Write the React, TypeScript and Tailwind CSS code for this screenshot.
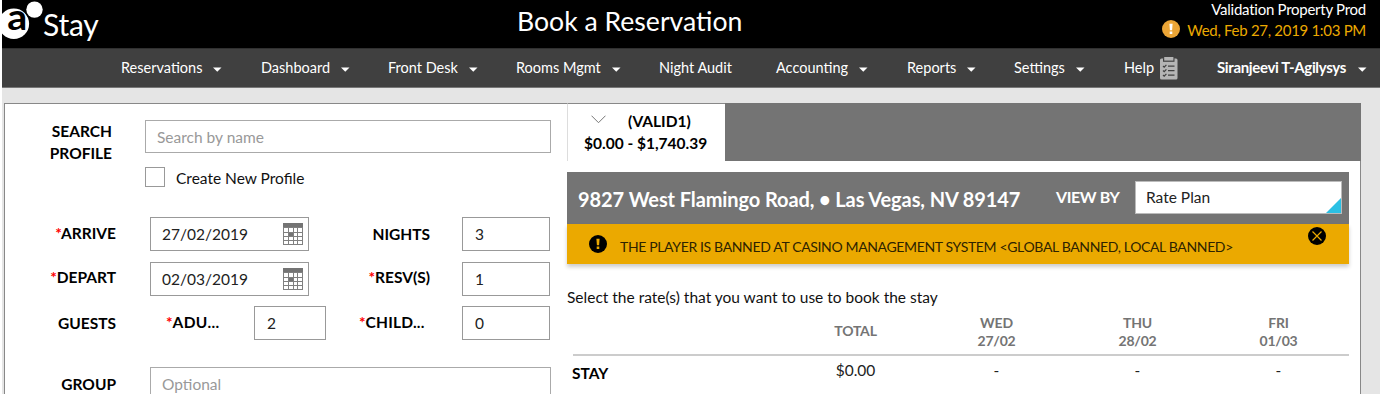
import React from 'react';

interface NavItem {
  label: string;
  width: string;
  text: string;
  caret?: boolean;
}

const navItems: NavItem[] = [
  { label: 'Reservations', width: 'w-[140px]', text: 'w-[92px]', caret: true },
  { label: 'Dashboard', width: 'w-[127px]', text: 'w-[80px]', caret: true },
  { label: 'Front Desk', width: 'w-[128px]', text: 'w-[81px]', caret: true },
  { label: 'Rooms Mgmt', width: 'w-[143px]', text: 'w-[96px]', caret: true },
  { label: 'Night Audit', width: 'w-[117px]', text: 'w-[80px]' },
  { label: 'Accounting', width: 'w-[131px]', text: 'w-[83px]', caret: true },
  { label: 'Reports', width: 'w-[107px]', text: 'w-[60px]', caret: true },
  { label: 'Settings', width: 'w-[110px]', text: 'w-[62px]', caret: true },
];

const days = [
  { day: 'WED', date: '27/02' },
  { day: 'THU', date: '28/02' },
  { day: 'FRI', date: '01/03' },
];

const Caret = () => (
  <svg width="9" height="5" viewBox="0 0 9 5" className="mt-[3px] shrink-0">
    <path d="M0 .5h8.5L4.25 4.7z" fill="#fff" />
  </svg>
);

const Logo = () => (
  <svg width="43" height="42" viewBox="0 0 43 42" className="shrink-0">
    <circle cx="11.8" cy="23.8" r="15.3" fill="#fff" />
    <circle cx="32.5" cy="9.6" r="9.8" fill="#000" />
    <circle cx="32.5" cy="9.6" r="8.2" fill="#fff" />
    <text x="5.2" y="29.6" fontSize="37" fontWeight="700" fontFamily="Lato, sans-serif" textLength="20" lengthAdjust="spacingAndGlyphs">a</text>
  </svg>
);

const ClipboardIcon = () => (
  <svg width="18" height="23" viewBox="0 0 18 23" className="mt-px ml-[5px] shrink-0">
    <rect x="0" y="1.5" width="17.5" height="21" rx="1.5" fill="#b5b5b5" />
    <path d="M3 1.2h11.5v3.6H3z" fill="#404040" />
    <path d="M4.2 0h9.2v3.6H4.2z" fill="#b5b5b5" />
    <path d="M8 9.2h6.5M8 13.7h6.5M8 18.2h6.5" stroke="#404040" strokeWidth="1.2" />
    <path d="M3 9l1.2 1.2 2.2-2.4M3 13.5l1.2 1.2 2.2-2.4M3 18l1.2 1.2 2.2-2.4" stroke="#404040" strokeWidth="1.2" fill="none" />
  </svg>
);

const CalendarIcon = () => (
  <svg width="20" height="22" viewBox="0 0 20 22" className="shrink-0">
    <path d="M0 0h20v22H0z" fill="#808080" />
    <path d="M0 0h20v4H0z" fill="#747474" />
    {[5, 10, 14, 18].map((y) =>
      [1, 6, 11, 15].map((x) => (
        <rect
          key={`${x}-${y}`}
          x={x}
          y={y}
          width={x === 11 ? 3 : 4}
          height={y === 5 ? 4 : 3}
          fill={x === 6 && y === 10 ? '#747474' : '#fff'}
        />
      ))
    )}
  </svg>
);

const AlertIcon = ({ fill, mark }: { fill: string; mark: string }) => (
  <svg width="18" height="18" viewBox="0 0 18 18" className="shrink-0">
    <circle cx="9" cy="9" r="9" fill={fill} />
    <path d="M7.4 3.8h3.2l-.5 6.4H7.9zM7.7 11.6h2.6v2.5H7.7z" fill={mark} />
  </svg>
);

const FieldLabel = ({ children, required, className }: { children: React.ReactNode; required?: boolean; className: string }) => (
  <span className={`block shrink-0 whitespace-nowrap text-[15.5px] font-bold leading-[22px] text-black ${className}`}>
    {required && <span className="text-[#f00]">*</span>}
    {children}
  </span>
);

const Field = ({ value, className }: { value: string; className: string }) => (
  <div className={`flex h-[34px] shrink-0 items-center border border-[#999] bg-white pt-0.5 pl-3 text-[15.5px] text-[#222] ${className}`}>
    {value}
  </div>
);

const DateField = ({ value }: { value: string }) => (
  <div className="flex h-[34px] w-[159px] shrink-0 items-center justify-between border border-[#999] pr-[5px] pl-[11px] text-[15.5px] text-[#222]">
    <span className="pt-0.5">{value}</span>
    <CalendarIcon />
  </div>
);

const TopBar = () => (
  <header className="flex h-12 items-start bg-black text-white">
    <div className="flex h-12 w-[515px] overflow-hidden">
      <Logo />
      <span className="-ml-[2px] text-[30px] leading-[48px] tracking-[-0.2px]">Stay</span>
    </div>
    <h1 className="w-[380px] text-[26.6px] leading-[42px]">Book a Reservation</h1>
    <div className="flex flex-1 flex-col items-end pr-[14px]">
      <span className="text-[15px] leading-[18px] tracking-[-0.26px]">Validation Property Prod</span>
      <div className="flex items-center gap-[7px] text-[15px] leading-[24px] tracking-[-0.3px] text-[#eba900]">
        <span className="-mt-0.5"><AlertIcon fill="#eba536" mark="#fff" /></span>
        <span>Wed, Feb 27, 2019 1:03 PM</span>
      </div>
    </div>
  </header>
);

const NavBar = () => (
  <nav className="flex h-10 items-center border-t border-b border-t-[#303030] border-b-[#777] bg-[#404040] pl-[119px] text-[14.5px] text-white">
    {navItems.map((item) => (
      <div key={item.label} className={`flex shrink-0 items-center ${item.width}`}>
        <span className={`whitespace-nowrap ${item.text}`}>{item.label}</span>
        {item.caret && <Caret />}
      </div>
    ))}
    <div className="flex w-[93px] shrink-0 items-center">
      <span className="w-[31px]">Help</span>
      <ClipboardIcon />
    </div>
    <div className="flex items-center">
      <span className="-mt-0.5 w-[141px] text-[15px] font-bold tracking-[-0.35px] whitespace-nowrap">Siranjeevi T-Agilysys</span>
      <Caret />
    </div>
  </nav>
);

const BookingForm = () => (
  <section className="w-[562px] shrink-0 border-t border-[#888] pt-4">
    <div className="flex">
      <FieldLabel className="w-[107px] text-right">
        SEARCH
        <br />
        PROFILE
      </FieldLabel>
      <div className="ml-[33px]">
        <div className="flex h-[33px] w-[406px] items-center border border-[#aaa] pt-0.5 pl-[11px] text-[15.5px] text-[#999]">Search by name</div>
        <div className="mt-[13px] flex items-center gap-[11px]">
          <div className="h-5 w-5 border border-[#999]" />
          <span className="pt-0.5 text-[15.5px] leading-5 text-[#111]">Create New Profile</span>
        </div>
      </div>
    </div>
    <div className="mt-[29px] flex">
      <FieldLabel required className="w-[111px] pt-[5px] text-right">ARRIVE</FieldLabel>
      <div className="ml-[34px]"><DateField value="27/02/2019" /></div>
      <FieldLabel className="w-[121px] pt-[6px] text-right">NIGHTS</FieldLabel>
      <Field value="3" className="ml-[32px] w-[88px]" />
    </div>
    <div className="mt-[11px] flex">
      <FieldLabel required className="w-[111px] pt-[4px] text-right">DEPART</FieldLabel>
      <div className="ml-[34px]"><DateField value="02/03/2019" /></div>
      <FieldLabel required className="w-[121px] pt-[4px] text-right">RESV(S)</FieldLabel>
      <Field value="1" className="ml-[32px] w-[88px]" />
    </div>
    <div className="mt-[10px] flex">
      <FieldLabel className="w-[111px] pt-[6px] text-right">GUESTS</FieldLabel>
      <FieldLabel required className="ml-[50px] w-[88px] pt-[5px]"><span className="tracking-[0.35px]">ADU...</span></FieldLabel>
      <Field value="2" className="w-[72px]" />
      <FieldLabel required className="ml-[33px] w-[103px] pt-[5px]"><span className="tracking-[0.2px]">CHILD...</span></FieldLabel>
      <Field value="0" className="w-[88px]" />
    </div>
    <div className="mt-[27px] flex">
      <FieldLabel className="w-[111px] pt-[6px] text-right">GROUP</FieldLabel>
      <div className="ml-[34px] flex h-[36px] w-[401px] items-center border border-[#aaa] pl-[11px] text-[15.5px] text-[#999]">Optional</div>
    </div>
  </section>
);

const RatePanel = () => (
  <section className="flex flex-1 flex-col">
    <div className="flex h-[58px] bg-[#747474]">
      <div className="w-[158px] border-t border-l border-t-[#888] border-l-[#ddd] bg-white pt-[6px] text-[15.5px] font-bold leading-[22px] text-black">
        <div className="flex items-center pl-[23px]">
          <svg width="15" height="9" viewBox="0 0 15 9" className="-mt-1 mr-[22px]">
            <path d="M.5.7l7 7 7-7" stroke="#777" fill="none" />
          </svg>
          <span>(VALID1)</span>
        </div>
        <div className="pl-4">$0.00 - $1,740.39</div>
      </div>
    </div>
    <div className="mt-[11px] mr-3 flex h-[52px] items-center bg-[#747474] text-white">
      <span className="w-[489px] pl-[11px] pt-0.5 text-[20px] font-bold tracking-[-0.1px] whitespace-nowrap">9827 West Flamingo Road, • Las Vegas, NV 89147</span>
      <span className="-mt-0.5 w-[79px] text-[16px] font-bold tracking-[-0.4px] whitespace-nowrap">VIEW BY</span>
      <div className="-mt-0.5 flex h-[33px] w-[207px] items-center justify-between border border-[#bbb] bg-white pl-[10px] text-[15.5px] text-[#222]">
        <span className="pt-0.5">Rate Plan</span>
        <svg width="15" height="15" viewBox="0 0 15 15" className="self-end">
          <path d="M15 0v15H0z" fill="#2bc0e4" />
        </svg>
      </div>
    </div>
    <div className="mr-3 flex h-10 shrink-0 items-center justify-between bg-[#eba900] pr-[23px] pl-[22px] shadow-[0_3px_4px_rgba(0,0,0,0.2)]">
      <AlertIcon fill="#000" mark="#eba900" />
      <span className="ml-[13px] flex-1 pt-[5px] text-[14px] tracking-[-0.35px] whitespace-nowrap text-[#2e2300]">
        THE PLAYER IS BANNED AT CASINO MANAGEMENT SYSTEM &lt;GLOBAL BANNED, LOCAL BANNED&gt;
      </span>
      <svg width="18" height="18" viewBox="0 0 18 18" className="-mt-4 shrink-0">
        <circle cx="9" cy="9" r="9" fill="#000" />
        <path d="M4.5 4.5l9 9M13.5 4.5l-9 9" stroke="#eba900" strokeWidth="1.2" />
      </svg>
    </div>
    <p className="mt-[21px] text-[15.5px] leading-6 text-[#111]">Select the rate(s) that you want to use to book the stay</p>
    <div className="mr-3 ml-[6px]">
      <div className="mt-px flex h-[46px] items-center border-b-2 border-[#ccc] text-center text-[14px] font-bold leading-[18px] tracking-[-0.2px] text-[#747474]">
        <span className="ml-[212px] w-[141px] pb-0.5">TOTAL</span>
        {days.map((d) => (
          <div key={d.day} className="w-[141px]">
            <div>{d.day}</div>
            <div>{d.date}</div>
          </div>
        ))}
      </div>
      <div className="flex h-[29px] items-center text-center text-[15.5px] text-[#222]">
        <span className="-ml-px w-[213px] pt-[6px] text-left font-bold text-black">STAY</span>
        <span className="w-[141px]">$0.00</span>
        {days.map((d) => (
          <span key={d.day} className="w-[141px]">-</span>
        ))}
      </div>
    </div>
  </section>
);

const App = () => {
  return (
    <div className="h-[401px] w-[1380px] overflow-hidden bg-white pl-0.5 font-['Lato',sans-serif]">
      <div className="h-[394px] overflow-hidden bg-[#e5e5e5]">
        <TopBar />
        <NavBar />
        <main className="mt-[15px] ml-0.5 flex h-[300px] w-[1357px] border-r border-l border-[#888] bg-white">
          <BookingForm />
          <RatePanel />
        </main>
      </div>
    </div>
  );
};

export default App;
